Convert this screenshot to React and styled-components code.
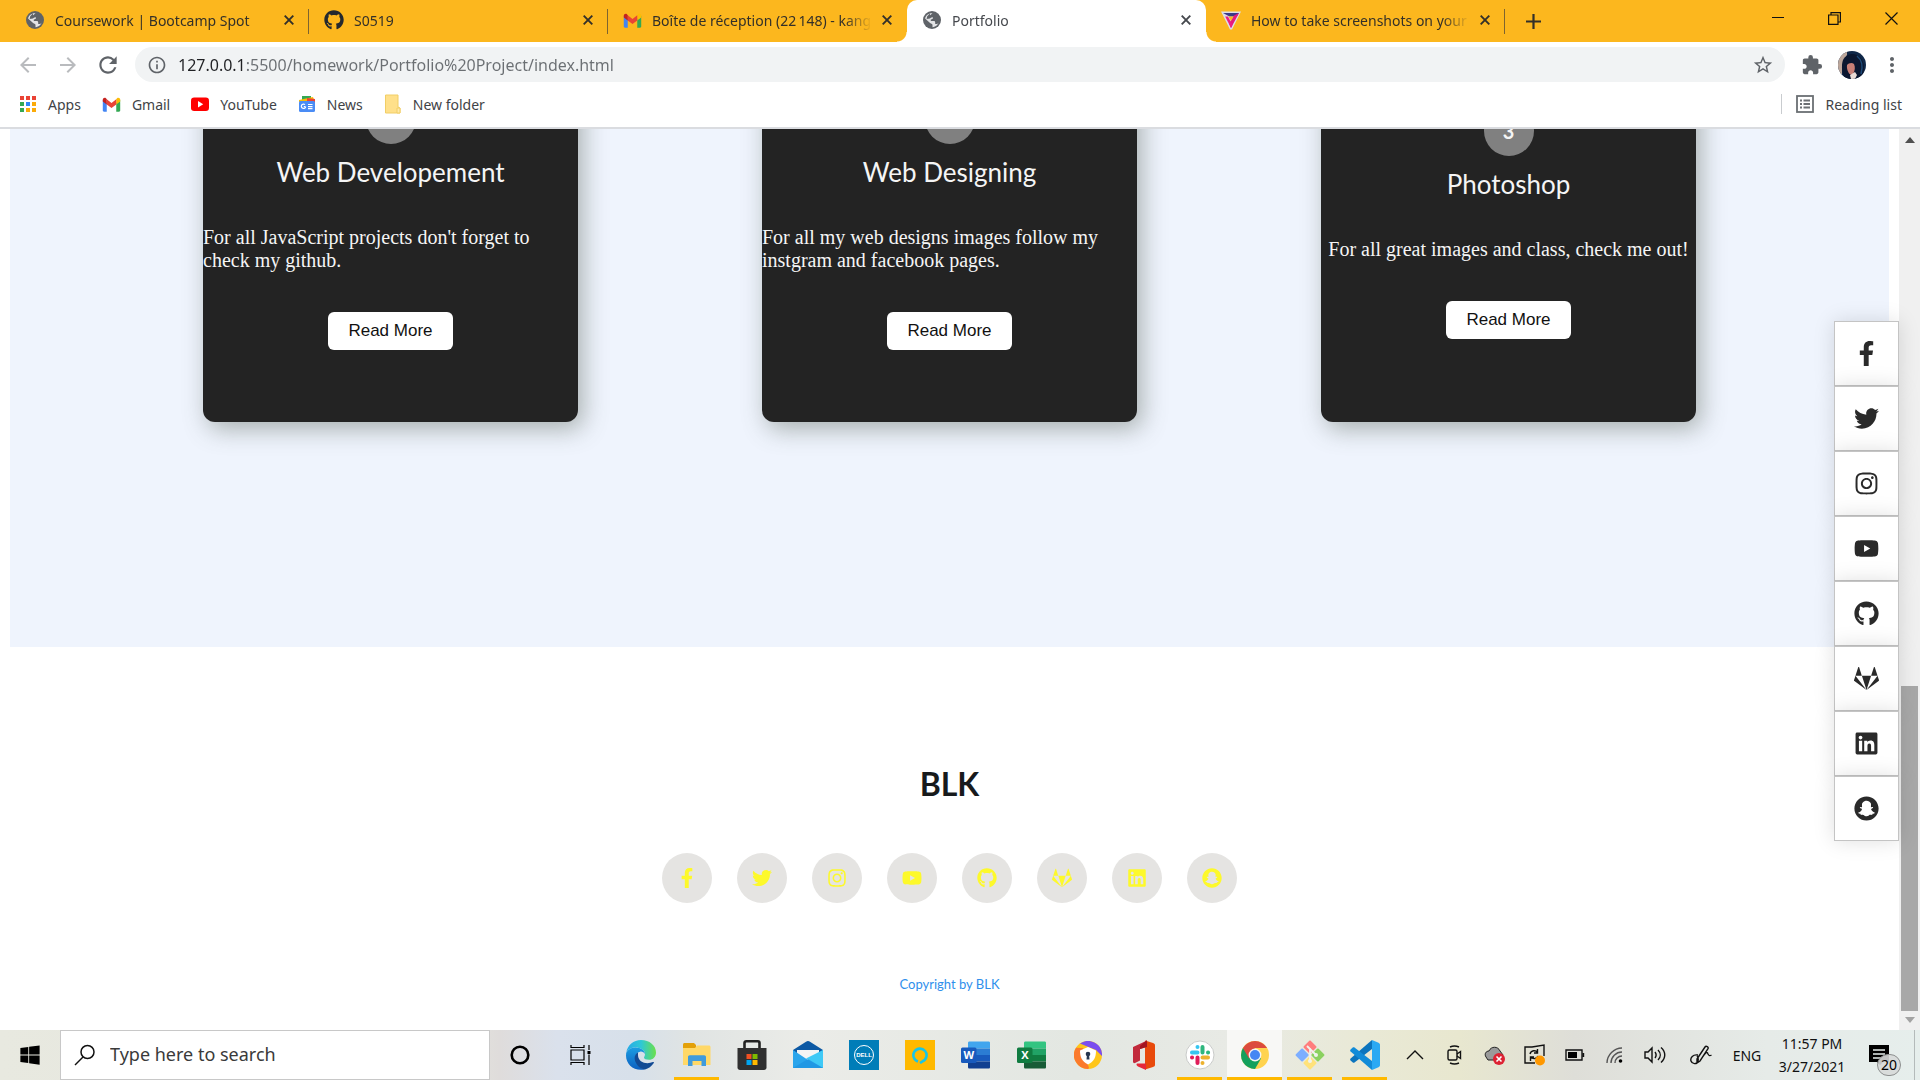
import React from "react";
import styled, { createGlobalStyle, css } from "styled-components";
import {
  FaFacebookF, FaTwitter, FaInstagram, FaYoutube, FaGithub, FaGitlab, FaLinkedin, FaSnapchat, FaWindows,
} from "react-icons/fa";
import {
  MdArrowBack, MdArrowForward, MdRefresh, MdInfoOutline, MdStarBorder, MdExtension, MdMoreVert,
} from "react-icons/md";

const UI_FONT = '"Noto Sans", "Open Sans", sans-serif';
const PAGE_FONT = 'Lato, "Open Sans", sans-serif';

const GlobalStyle = createGlobalStyle`
  * { box-sizing: border-box; }
  body { margin: 0; background: #fff; font-family: ${UI_FONT}; }
  button, input { font-family: inherit; }
  svg { display: block; flex: none; }
`;

const Screen = styled.div`
  height: 100vh;
  display: flex;
  flex-direction: column;
  overflow: hidden;
`;

const plainButton = css`
  display: flex;
  align-items: center;
  justify-content: center;
  padding: 0;
  border: 0;
  background: none;
  color: inherit;
`;

/* Browser window */

const TabStrip = styled.header`
  flex: none;
  display: flex;
  height: 42px;
  padding-left: 10px;
  background: #fcb71e;
  color: #333029;
`;

const Tab = styled.div`
  position: relative;
  flex: 0 1 299px;
  min-width: 0;
  display: flex;
  align-items: center;
  padding: 0 10px 2px 15px;
  font-size: 14px;
  ${(p) => p.$divider && css`
    &::after {
      content: "";
      position: absolute;
      right: 0;
      top: 9px;
      width: 1px;
      height: 25px;
      background: #7d6430;
    }
  `}
  ${(p) => p.$active && css`
    background: #fff;
    color: #45484d;
    border-radius: 10px 10px 0 0;
    &::before, &::after {
      content: "";
      position: absolute;
      bottom: 0;
      width: 10px;
      height: 10px;
    }
    &::before { left: -10px; background: radial-gradient(circle at 0 0, transparent 9px, #fff 10px); }
    &::after { right: -10px; background: radial-gradient(circle at 100% 0, transparent 9px, #fff 10px); }
  `}
`;

const TabTitle = styled.span`
  flex: 1;
  margin: 0 5px 0 10px;
  overflow: hidden;
  white-space: nowrap;
  mask-image: linear-gradient(90deg, #000 calc(100% - 28px), transparent);
`;

const TabButton = styled.button`
  ${plainButton}
  width: 20px;
  height: 20px;
`;

const NewTab = styled.button`
  ${plainButton}
  width: 56px;
`;

const WindowButtons = styled.div`
  display: flex;
  margin-left: auto;
  height: 36px;
  color: #111;
`;

const WindowButton = styled.button`
  ${plainButton}
  width: 57px;
`;

const Toolbar = styled.form`
  flex: none;
  display: flex;
  align-items: center;
  height: 45px;
  padding: 0 8px;
  color: #5f6368;
`;

const ToolButton = styled.button`
  ${plainButton}
  width: 40px;
  height: 36px;
  color: ${(p) => (p.$faded ? "#b9bbbe" : "#5f6368")};
`;

const AddressBar = styled.div`
  flex: 1;
  display: flex;
  align-items: center;
  height: 35px;
  margin: 0 7px;
  padding: 0 2px 0 12px;
  border-radius: 18px;
  background: #f1f3f4;
`;

const AddressInput = styled.input`
  flex: 1;
  min-width: 0;
  margin-left: 11px;
  padding: 0;
  border: 0;
  outline: 0;
  font-size: 16px;
  color: transparent;
  background: linear-gradient(90deg, #202124 68px, #6b6f73 68px) text;
`;

const Bookmarks = styled.nav`
  flex: none;
  display: flex;
  align-items: center;
  gap: 21px;
  height: 42px;
  padding: 0 18px 6px 19px;
  border-bottom: 2px solid #dadce0;
`;

const Bookmark = styled.a`
  display: flex;
  align-items: center;
  gap: 11px;
  font-size: 14px;
  color: #3f4347;
  text-decoration: none;
  white-space: nowrap;
`;

const ReadingList = styled.button`
  ${plainButton}
  gap: 11px;
  height: 20px;
  margin-left: auto;
  padding-left: 14px;
  border-left: 1px solid #c9cccf;
  font-size: 14px;
  color: #3f4347;
`;

/* Page shown in the window */

const Viewport = styled.div`
  position: relative;
  flex: 1;
  min-height: 0;
  display: flex;
`;

const Page = styled.main`
  flex: 1;
  min-width: 0;
  display: flex;
  flex-direction: column;
  justify-content: flex-end;
  padding: 0 10px;
  overflow: hidden;
`;

const Services = styled.section`
  flex: none;
  display: flex;
  justify-content: center;
  gap: 184px;
  padding: 125px 0 225px;
  background: #eff4fd;
`;

const Card = styled.article`
  width: 375px;
  height: 400px;
  display: flex;
  flex-direction: column;
  align-items: center;
  justify-content: center;
  border-radius: 12px;
  background: #232323;
  color: #f5f5f5;
  box-shadow: 5px 7px 25px rgba(70, 80, 70, 0.42);
`;

const CardNumber = styled.div`
  width: 50px;
  height: 50px;
  border-radius: 50%;
  background: #808080;
  font: bold 20px/50px ${PAGE_FONT};
  text-align: center;
`;

const CardTitle = styled.h2`
  margin: 11px 0 37px;
  font: 400 26px/34px ${PAGE_FONT};
`;

const CardText = styled.p`
  margin: 0 0 40px;
  font: 20px/23px "Liberation Serif", serif;
`;

const ReadMore = styled.button`
  width: 125px;
  height: 38px;
  flex: none;
  padding: 0;
  border: 0;
  border-radius: 6px;
  background: #fff;
  font: 17px "Liberation Sans", sans-serif;
  color: #111;
`;

const Footer = styled.footer`
  flex: none;
  display: flex;
  flex-direction: column;
  align-items: center;
  padding: 117px 0 35px;
  font-family: ${PAGE_FONT};
`;

const Brand = styled.h2`
  margin: 0;
  font-size: 32px;
  line-height: 40px;
  color: #171a1c;
`;

const FooterLinks = styled.nav`
  display: flex;
  gap: 25px;
  margin: 49px 0 71px;
`;

const FooterLink = styled.a`
  display: flex;
  align-items: center;
  justify-content: center;
  width: 50px;
  height: 50px;
  border-radius: 50%;
  background: #e5e4e2;
  font-size: 20px;
  color: #fdf92b;
`;

const Copyright = styled.p`
  margin: 0;
  font-size: 13px;
  line-height: 21px;
  color: #2f8fec;
`;

const SocialRail = styled.nav`
  position: absolute;
  top: calc(50% + 1px);
  right: 21px;
  transform: translateY(-50%);
`;

const RailLink = styled.a`
  display: flex;
  align-items: center;
  justify-content: center;
  width: 65px;
  height: 65px;
  border: 1px solid #c4c4c4;
  background: #fff;
  box-shadow: 0 0 20px rgba(0, 0, 0, 0.13);
  font-size: 25px;
  color: #2a2a2a;
`;

const Scrollbar = styled.div`
  flex: none;
  display: flex;
  flex-direction: column;
  align-items: center;
  justify-content: space-between;
  width: 21px;
  padding: 8px 0 7px;
  background: #f0f0f0;
`;

const Thumb = styled.div`
  width: 17px;
  height: 325px;
  margin: auto 0 6px;
  background: #a8a8a8;
`;

/* Taskbar */

const Taskbar = styled.footer`
  flex: none;
  display: flex;
  height: 50px;
  background: linear-gradient(90deg, #e8e9e0 0, #e4e4dd 24%, #dfdcdb 26%, #dae1ec 29%, #d7e0ea 33%, #e0e4e3 36%,
    #ebece8 42%, #e3e7e2 56%, #e8eae5 64%, #e9e9d6 71%, #e8e7cf 76%, #deded8 82%, #e6ebe8 92%, #e6eeec 100%);
`;

const TaskButton = styled.button`
  ${plainButton}
  flex: none;
  width: 60px;
  color: #000;
`;

const AppButton = styled.button`
  ${plainButton}
  flex: none;
  width: ${(p) => (p.$running ? 55 : 56)}px;
  padding-top: ${(p) => (p.$running ? 3 : 0)}px;
  background: ${(p) => (p.$active ? "#f8f8f6" : "none")};
  border-bottom: ${(p) => (p.$running ? "3px solid #ffb900" : "0")};
  ${(p) => p.$running && !p.$active && css`
    width: 45px;
    margin: 0 5px;
  `}
`;

const SearchBox = styled.label`
  flex: none;
  display: flex;
  align-items: center;
  width: 430px;
  padding: 0 13px;
  gap: 14px;
  border: 1px solid #c8c8c8;
  background: #fff;
`;

const SearchInput = styled.input`
  flex: 1;
  min-width: 0;
  padding: 0 0 2px;
  border: 0;
  outline: 0;
  font-size: 18px;
  color: #333;
  &::placeholder { color: #3a3a3a; opacity: 1; }
`;

const Apps = styled.div`
  display: flex;
  padding-left: 3px;
`;

const Tray = styled.div`
  display: flex;
  margin-left: auto;
`;

const TrayButton = styled.button`
  ${plainButton}
  width: ${(p) => (p.$wide ? 52 : 40)}px;
  color: #111;
  font-size: 14px;
`;

const Clock = styled.button`
  ${plainButton}
  flex-direction: column;
  width: 90px;
  font-size: 14px;
  line-height: 23px;
  color: #111;
`;

const Notifications = styled.button`
  ${plainButton}
  position: relative;
  width: 58px;
  margin-right: 5px;
  padding-right: 14px;
  border-right: 1px solid #b4baba;
  color: #000;
`;

const Badge = styled.span`
  position: absolute;
  left: 20px;
  top: 24px;
  width: 24px;
  height: 22px;
  border: 1px solid #8d8f8f;
  border-radius: 11px;
  background: rgba(215, 217, 217, 0.9);
  font-size: 14px;
  line-height: 20px;
  text-align: center;
`;

/* Drawings */

const CloseTabIcon = () => (
  <svg width="10" height="10" viewBox="0 0 10 10"><path d="m.7.7 8.600 8.600m0-8.600L.7 9.300" stroke="currentColor" strokeWidth="1.900" /></svg>
);
const PlusIcon = () => (
  <svg width="15" height="15" viewBox="0 0 15 15"><path d="M7.500 0v15M0 7.500h15" stroke="currentColor" strokeWidth="2.200" /></svg>
);

const Globe = () => (
  <svg width="20" height="20" viewBox="0 0 20 20">
    <circle cx="10" cy="10" r="9" fill="#5f6368" />
    <path d="M10.500 3.200 7.800 5.500c-.8.900.2 2 1.200 1.900l1.800-.2c.6 1.300-.4 2.200-2 2.200v1.700h3c1 0 1.400.7 1.400 1.500v1.300h1.500c1.400 0 2.200-1.200 2.200-2.900-.2 3.200-2.900 6-6.400 6.200v-1.900c0-1-.7-1.600-1.700-1.700L7.500 12.500 3.100 8.600C3.700 5.300 6.800 2.800 10.500 3.200z" fill="#e3e4e6" />
    <path d="M8 3.600 5.200 6.200 4.600 9 8 8.600 9.500 7 8 6.400z" fill="#5f6368" />
  </svg>
);

const GmailIcon = () => (
  <svg width="19" height="19" viewBox="0 0 24 24">
    <path d="M1 6v13.500c0 .8.600 1.500 1.500 1.500H6V10z" fill="#4285f4" />
    <path d="M23 6v13.500c0 .8-.6 1.500-1.500 1.500H18V10z" fill="#34a853" />
    <path d="M18 5.500V12l5-3.700V6c0-2.300-2.400-3.300-4-2z" fill="#fbbc04" />
    <path d="M6 12V5.500l6 4.500 6-4.500V12l-6 4.500z" fill="#ea4335" />
    <path d="M1 6v2.300L6 12V5.500L5 4C3.400 2.700 1 3.700 1 6z" fill="#c5221f" />
  </svg>
);

const TriangleLogo = () => (
  <svg width="20" height="20" viewBox="0 0 20 20">
    <path d="M0 1.500h20L11 19.500H9z" fill="#dcdde8" />
    <path d="M2 3h16l-2.200 3.600H8.500z" fill="#3b3a86" />
    <path d="M18 3 10 18 8 13.500l5-8z" fill="#e5187e" />
    <path d="M4.200 6.500 10 18l1.400-3L7 6.500z" fill="#ed1c85" />
    <path d="M7.500 6.500h5L10 11z" fill="#fcb71e" />
  </svg>
);

const AppsIcon = () => {
  const colors = ["#ea4335", "#ea4335", "#ea4335", "#34a853", "#2f86f6", "#fbab09", "#34a853", "#fbab09", "#fbab09"];
  return (
    <svg width="18" height="18" viewBox="0 0 18 18">
      {colors.map((c, i) => <rect key={i} x={1 + (i % 3) * 6} y={1 + Math.floor(i / 3) * 6} width="4" height="4" fill={c} />)}
    </svg>
  );
};

const YouTubeMark = () => (
  <svg width="18" height="18" viewBox="0 0 18 18">
    <rect y="2.500" width="18" height="13.500" rx="3.200" fill="#f00" />
    <path d="M7 6v6.500l5.200-3.200z" fill="#fff" />
  </svg>
);

const NewsIcon = () => (
  <svg width="18" height="18" viewBox="0 0 18 18">
    <path d="M4 1h9v5H4z" fill="#34a853" />
    <path d="m1 5 14-3 2 5H1z" fill="#fbbc04" />
    <path d="m9 3 8 1v4H9z" fill="#ea4335" />
    <rect x="1" y="6" width="16" height="11" rx="1.500" fill="#4a8cf5" />
    <path d="M7.500 11.500H5.800M7 9.600a2.200 2.200 0 1 0 .7 2M10 9.500h4.500M10 11.600h4.500M10 13.700h4.500" stroke="#fff" strokeWidth="1.200" fill="none" />
  </svg>
);

const FolderIcon = () => (
  <svg width="18" height="20" viewBox="0 0 18 20">
    <path d="M1.500 1h12.500v12l2 1v5H1.500z" fill="#ffe08a" stroke="#f1ce66" />
    <path d="M13 19v-5h3v5z" fill="#ffe9a8" stroke="#f1ce66" />
  </svg>
);

const ListIcon = () => (
  <svg width="18" height="20" viewBox="0 0 18 20" fill="none" stroke="#6b6f73" strokeWidth="1.800">
    <rect x="1" y="2" width="16" height="16" />
    <path d="M4 6.500h2M7.500 6.500H14M4 10h2M7.500 10H14M4 13.500h2M7.500 13.500H14" />
  </svg>
);

const Avatar = () => (
  <svg width="28" height="28" viewBox="0 0 28 28">
    <clipPath id="face"><circle cx="14" cy="14" r="14" /></clipPath>
    <g clipPath="url(#face)">
      <path d="M0 0h28v28H0z" fill="#0f2748" />
      <path d="M0 6 9 0v4L4 14v9H0z" fill="#bda79b" />
      <path d="M5 9c3-7 12-8 17-3 5 6 5 13 2 19l-6 3H7C4 22 3 15 5 9z" fill="#0b1730" />
      <path d="M9 14c1.500-2 5-3 7-1 1.500 3 1 7-1 10-1.500 1.500-3.500.500-4.500-1.500C9.300 19.500 8.600 16.500 9 14z" fill="#c87f76" />
      <path d="m12 24 5-3 2 3-2 4h-4z" fill="#eadbd5" />
      <path d="M19 5c5 4 6 11 4 18" stroke="#1d4a78" strokeWidth="1.500" fill="none" />
    </g>
  </svg>
);

const Minimize = () => <svg width="12" height="12" viewBox="0 0 12 12"><path d="M0 5.500h12" stroke="#111" /></svg>;
const Restore = () => (
  <svg width="13" height="13" viewBox="0 0 13 13" fill="none" stroke="#111" strokeWidth="1.200">
    <path d="M.6 3h9.400v9.400H.6zM3 3V.6h9.400V10H10" />
  </svg>
);
const CloseWindow = () => <svg width="13" height="13" viewBox="0 0 13 13"><path d="m.5.5 12 12m0-12-12 12" stroke="#111" strokeWidth="1.200" /></svg>;

const SearchIcon = () => (
  <svg width="22" height="22" viewBox="0 0 22 22" fill="none" stroke="#111" strokeWidth="1.500">
    <circle cx="13.500" cy="8" r="6.500" /><path d="M9 13 1 21" />
  </svg>
);
const CortanaIcon = () => <svg width="20" height="20" viewBox="0 0 20 20"><circle cx="10" cy="10" r="8.300" fill="none" stroke="#000" strokeWidth="2.600" /></svg>;
const TaskViewIcon = () => (
  <svg width="21" height="20" viewBox="0 0 21 20" fill="none" stroke="#000" strokeWidth="1.200">
    <path d="M1 5h13v10H1zM1 0v2.500h13V0M1 20v-2.500h13V20M19 0v5M19 9.500V20" /><path d="M17.500 6h3v3h-3z" fill="#000" stroke="none" />
  </svg>
);

const EdgeIcon = () => (
  <svg width="30" height="30" viewBox="0 0 30 30">
    <defs>
      <linearGradient id="edgeTop"><stop offset="0" stopColor="#27a9e8" /><stop offset=".5" stopColor="#2ec8d6" /><stop offset="1" stopColor="#6be04a" /></linearGradient>
      <linearGradient id="edgeSide" x1="0" y1="0" x2="0" y2="1"><stop offset="0" stopColor="#1b9de2" /><stop offset="1" stopColor="#0d5fc0" /></linearGradient>
    </defs>
    <path d="M.3 12.500C1.500 5 7.500 0 15 0c8.500 0 15 5.500 15 12.500 0 4.500-3 7.300-7 7.300-3 0-5-1-5-2.300 0-.8 1-1.300 1-3.500C19 10 14 7.500 9.500 7.500 5.500 7.500 1.800 9.500.3 12.500z" fill="url(#edgeTop)" />
    <path d="M.2 12.800C2 9.500 5.500 7.600 9.500 7.600c5.500 0 9.500 3.400 9.500 6.600-1-2-3-3-5-2.500-4 1-5 4-4 8 1 5 5.500 9 8.500 9.800C8 31.500 0 24.500 0 15.500z" fill="url(#edgeSide)" />
    <path d="M12 12.500c-4 2-4 6.500-2 10.500 2.500 4.500 6.500 6.500 9 6.500 3.500-1 6.500-3 8.800-6.500.4-.8-.2-1.200-.9-.9-6 2.700-14.900.6-14.900-7z" fill="#124a94" />
  </svg>
);
const ExplorerIcon = () => (
  <svg width="28" height="24" viewBox="0 0 28 24">
    <path d="M0 1.500C0 .7.700 0 1.500 0H11l2 2v4H0z" fill="#e3a008" />
    <path d="M0 5h12l2-2.500h12c.8 0 1.500.7 1.500 1.500v18H0z" fill="#ffd867" />
    <path d="M5 23V14c0-1 .7-1.800 1.800-1.800h14.400c1 0 1.800.8 1.800 1.800v9h-4.500v-5h-9v5z" fill="#3f9bdc" />
  </svg>
);
const StoreIcon = () => (
  <svg width="30" height="30" viewBox="0 0 30 30">
    <path d="M7.500 9V3c0-1 .7-1.700 1.700-1.700h11.600c1 0 1.700.7 1.700 1.700v6" fill="none" stroke="#222" strokeWidth="2.600" />
    <path d="M.5 8h29v19.500c0 1.500-1 2.500-2.500 2.500H3C1.500 30 .5 29 .5 27.500z" fill="#303030" />
    <path d="M9.500 14h5v5h-5z" fill="#f25022" /><path d="M15.500 14h5v5h-5z" fill="#7fba00" /><path d="M9.500 20h5v5h-5z" fill="#00a4ef" /><path d="M15.500 20h5v5h-5z" fill="#ffb900" />
  </svg>
);
const MailIcon = () => (
  <svg width="30" height="28" viewBox="0 0 30 28">
    <path d="M0 9 13 .7c1.300-.9 2.700-.9 4 0L30 9v4H0z" fill="#0c59a4" />
    <path d="M4 9h22v8l-11 4L4 17z" fill="#f4f4f4" />
    <path d="M0 9v18h30V9L15 19z" fill="#2aa5ec" /><path d="M30 9v18L13 17.500z" fill="#3fc9f6" /><path d="M0 27h30L15 18z" fill="#1d8fe0" opacity=".6" />
  </svg>
);
const Tile = styled.span`
  display: flex;
  align-items: center;
  justify-content: center;
  width: 30px;
  height: 30px;
  background: ${(p) => p.$color};
`;
const DellRing = styled.span`
  width: 20px;
  height: 20px;
  border: 1px solid #fff;
  border-radius: 50%;
  font: bold 6px/18px "Liberation Sans", sans-serif;
  text-align: center;
  color: #fff;
`;
const AlexaRing = () => (
  <svg width="16" height="17" viewBox="0 0 16 17"><path d="M6 14.500A6.600 6.600 0 1 1 10.500 14.300L8 16" fill="none" stroke="#19c5e6" strokeWidth="2.600" /></svg>
);
const OfficeDoc = ({ letter, shades, tag }) => (
  <svg width="30" height="28" viewBox="0 0 30 28">
    <path d="M7 2C7 1 7.500.5 8.500.5h19c1 0 1.500.5 1.500 1.500v5.500H7z" fill={shades[0]} />
    <path d="M7 7.500h22V14H7z" fill={shades[1]} /><path d="M7 14h22v6.500H7z" fill={shades[2]} />
    <path d="M7 20.500h22V26c0 1-.5 1.500-1.500 1.500h-19C7.500 27.500 7 27 7 26z" fill={shades[3]} />
    <rect y="6.500" width="15.500" height="15.500" rx="1.500" fill={tag} />
    <text x="7.800" y="18.300" fill="#fff" fontFamily="Open Sans, sans-serif" fontWeight="700" fontSize="11" textAnchor="middle">{letter}</text>
  </svg>
);
const PrivacyBrowserIcon = () => (
  <svg width="28" height="28" viewBox="0 0 28 28">
    <circle cx="14" cy="14" r="14" fill="#ffc61a" />
    <path d="M14 28A14 14 0 0 1 2 6.700L9 7l6 20z" fill="#fb7a2c" />
    <path d="M6 2.600A14 14 0 0 1 28 15L22 9z" fill="#7b4df0" />
    <path d="M6 9.500 14 6l8 3.500c0 7-2 11-8 14-6-3-8-7-8-14z" fill="#fff" />
    <circle cx="14" cy="13" r="2.300" fill="#26354f" /><path d="M13 13h2l.5 5.500h-3z" fill="#26354f" />
  </svg>
);
const OfficeIcon = () => (
  <svg width="24" height="30" viewBox="0 0 24 30">
    <path d="M1 7 14 1v6l-6 2v11.500L3 23c-1.500.5-2-.5-2-1.500z" fill="#c22a3c" />
    <path d="M13 .5 21 3c1.500.5 2 1 2 2.500v19c0 1.500-.5 2-2 2.500l-8 2.500z" fill="#e84a0c" />
    <path d="M5 23.500h9V30L6 26.500c-1.500-.8-2-2-1-3z" fill="#e5283a" /><path d="M8 6 15 0v7l-7 2z" fill="#a31621" />
  </svg>
);
const SlackIcon = () => (
  <svg width="30" height="30" viewBox="0 0 30 30">
    <circle cx="15" cy="15" r="14" fill="#fff" stroke="#c9cbc9" />
    <g strokeLinecap="round" strokeWidth="4">
      <path d="M7 12.500h5.500M12.500 7v.1" stroke="#36c5f0" /><path d="M17.500 7v5.500M23 12.500h.1" stroke="#2eb67d" />
      <path d="M23 17.500h-5.500M17.500 23v.1" stroke="#ecb22e" /><path d="M12.500 23v-5.500M7 17.500h.1" stroke="#e01e5a" />
    </g>
  </svg>
);
const ChromeIcon = () => (
  <svg width="28" height="28" viewBox="0 0 28 28">
    <circle cx="14" cy="14" r="14" fill="#ffd34f" />
    <path d="M14 14 1.900 7A14 14 0 0 0 14 28l6-10.500z" fill="#14a05d" />
    <path d="M1.900 7A14 14 0 0 1 26.100 7H14l-6 10.500z" fill="#dc4b3e" />
    <circle cx="14" cy="14" r="6.400" fill="#f4f4f4" /><circle cx="14" cy="14" r="5" fill="#4587f3" />
  </svg>
);
const GitIcon = () => (
  <svg width="30" height="30" viewBox="0 0 30 30">
    <g transform="rotate(45 15 15)">
      <rect x="4.500" y="4.500" width="9.800" height="9.800" rx="1" fill="#ff7d7d" /><rect x="15.700" y="4.500" width="9.800" height="9.800" rx="1" fill="#8bd160" />
      <rect x="4.500" y="15.700" width="9.800" height="9.800" rx="1" fill="#7daeff" /><rect x="15.700" y="15.700" width="9.800" height="9.800" rx="1" fill="#ffe27a" />
    </g>
    <path d="M15 8v13M12 6l9 9" stroke="#f1f2ee" strokeWidth="1.800" /><circle cx="15" cy="21" r="2" fill="#f1f2ee" /><circle cx="21" cy="15" r="2" fill="#f1f2ee" />
  </svg>
);
const CodeIcon = () => (
  <svg width="30" height="30" viewBox="0 0 30 30">
    <path d="M22 0v9L4.500 22.500c-.6.400-1.200.4-1.700 0L.6 20.400c-.6-.6-.6-1.400 0-2z" fill="#0b74bd" />
    <path d="M22 30v-9L4.500 7.500c-.6-.4-1.200-.4-1.700 0L.6 9.600c-.6.6-.6 1.400 0 2z" fill="#118bd8" />
    <path d="M22 0 28.500 2.800c1 .5 1.500 1.200 1.500 2.200v20c0 1-.5 1.700-1.500 2.200L22 30z" fill="#2aa9f3" />
  </svg>
);

const stroke = { fill: "none", stroke: "#111", strokeWidth: 1.4 };
const Chevron = () => <svg width="18" height="10" viewBox="0 0 18 10" {...stroke}><path d="m1 9 8-8 8 8" /></svg>;
const CameraIcon = () => (
  <svg width="18" height="20" viewBox="0 0 18 20" {...stroke}><rect x="2" y="5" width="9" height="10" rx="1.500" /><path d="M11 9l3.500-2.500v7L11 11M4 2c3-1.300 6-1.300 9 0M4 18c3 1.300 6 1.300 9 0" /></svg>
);
const CloudIcon = () => (
  <svg width="22" height="20" viewBox="0 0 22 20">
    <path d="M2 12c-2-3 0-6 3-6 2-5 9-5 11 0l3 4-6 5H4z" fill="#9a9a9a" stroke="#222" />
    <circle cx="15" cy="14" r="6" fill="#dd2233" /><path d="m12.500 11.500 5 5m0-5-5 5" stroke="#fff" strokeWidth="1.600" />
  </svg>
);
const SyncIcon = () => (
  <svg width="22" height="22" viewBox="0 0 22 22" {...stroke}>
    <path d="M20 12V1L8 3H1v16h10M6 10c1-4 6-4 7.500-1.500M13.500 5v4H10M14 12c-1 3-5 3.500-7.500 1M6.500 17v-4H10" /><circle cx="16" cy="16.500" r="5" fill="#ff9800" stroke="none" />
  </svg>
);
const BatteryIcon = () => <svg width="20" height="12" viewBox="0 0 20 12" {...stroke}><path d="M1 1h16v10H1zM18.500 4v4" /><path d="M3 3h9v6H3z" fill="#000" stroke="none" /></svg>;
const WifiIcon = () => (
  <svg width="18" height="18" viewBox="0 0 18 18" {...stroke}><path d="M1 17C1 9 8 2 16 2M5 17C5 11 10 6 16 6M9 17c0-4 3-7 7-7" stroke="#555" /><circle cx="14.500" cy="15" r="1.800" fill="#000" stroke="none" /></svg>
);
const SpeakerIcon = () => (
  <svg width="22" height="18" viewBox="0 0 22 18" {...stroke}><path d="M1 6h3l4-4v14l-4-4H1zM11 6c1.500 2 1.500 4 0 6M14 4c3 3 3 7 0 10M17 1.500c5 4.500 5 10.500 0 15" /></svg>
);
const PenIcon = () => (
  <svg width="22" height="20" viewBox="0 0 22 20" {...stroke}><path d="M8 10c-5-1-8 3-7 6 1 3 6 4 7 0 .500-2 0-4-1-5M7 14 15 2c1-1.500 4 0 3 1.700L10 16l-3 2zM12 13c3-5 5-7 6-4 1 2 2 2 3.500 1" /></svg>
);
const MessageIcon = () => (
  <svg width="20" height="20" viewBox="0 0 20 20"><path d="M0 0h20v17h-6l-3 3-3-3H0z" /><path d="M4 5h12M4 9h12M4 13h8" stroke="#e6eeec" strokeWidth="1.300" /></svg>
);
const Arrow = ({ down }) => (
  <svg width="10" height="6" viewBox="0 0 10 6"><path d={down ? "M0 0h10L5 6z" : "M0 6h10L5 0z"} fill={down ? "#a3a3a3" : "#505050"} /></svg>
);

/* Content */

const TABS = [
  { title: "Coursework | Bootcamp Spot", icon: <Globe />, divider: true },
  { title: "S0519", icon: <FaGithub size={20} color="#24292e" />, divider: true },
  { title: "Boîte de réception (22\u2009148) - kang", icon: <GmailIcon /> },
  { title: "Portfolio", icon: <Globe />, active: true },
  { title: "How to take screenshots on your", icon: <TriangleLogo />, divider: true },
];

const BOOKMARKS = [
  ["Apps", <AppsIcon />], ["Gmail", <GmailIcon />], ["YouTube", <YouTubeMark />], ["News", <NewsIcon />], ["New folder", <FolderIcon />],
];

const CARDS = [
  ["Web Developement", "For all JavaScript projects don't forget to check my github."],
  ["Web Designing", "For all my web designs images follow my instgram and facebook pages."],
  ["Photoshop", "For all great images and class, check me out!"],
];

const SOCIALS = [
  ["Facebook", FaFacebookF], ["Twitter", FaTwitter], ["Instagram", FaInstagram], ["YouTube", FaYoutube],
  ["GitHub", FaGithub], ["GitLab", FaGitlab], ["LinkedIn", FaLinkedin], ["Snapchat", FaSnapchat],
];

const APPS = [
  { name: "Edge", icon: <EdgeIcon /> },
  { name: "File Explorer", icon: <ExplorerIcon />, running: true },
  { name: "Store", icon: <StoreIcon /> },
  { name: "Mail", icon: <MailIcon /> },
  { name: "Dell", icon: <Tile $color="#007db8"><DellRing>DELL</DellRing></Tile> },
  { name: "Alexa", icon: <Tile $color="#ffb900"><AlexaRing /></Tile> },
  { name: "Word", icon: <OfficeDoc letter="W" shades={["#41a5ee", "#2b7cd3", "#185abd", "#103f91"]} tag="#185abd" /> },
  { name: "Excel", icon: <OfficeDoc letter="X" shades={["#33c481", "#21a366", "#107c41", "#185c37"]} tag="#107c41" /> },
  { name: "Secure Browser", icon: <PrivacyBrowserIcon /> },
  { name: "Office", icon: <OfficeIcon /> },
  { name: "Slack", icon: <SlackIcon />, running: true },
  { name: "Chrome", icon: <ChromeIcon />, running: true, active: true },
  { name: "Git", icon: <GitIcon />, running: true },
  { name: "Code", icon: <CodeIcon />, running: true },
];

const TRAY = [
  ["Show hidden icons", <Chevron />], ["Meet now", <CameraIcon />], ["OneDrive", <CloudIcon />], ["Update", <SyncIcon />],
  ["Battery", <BatteryIcon />], ["Network", <WifiIcon />], ["Volume", <SpeakerIcon />],
];

function BrowserChrome() {
  return (
    <>
      <TabStrip>
        {TABS.map((t) => (
          <Tab key={t.title} $active={t.active} $divider={t.divider}>
            {t.icon}
            <TabTitle>{t.title}</TabTitle>
            <TabButton aria-label={`Close ${t.title}`}><CloseTabIcon /></TabButton>
          </Tab>
        ))}
        <NewTab aria-label="New tab"><PlusIcon /></NewTab>
        <WindowButtons>
          <WindowButton aria-label="Minimize"><Minimize /></WindowButton>
          <WindowButton aria-label="Restore"><Restore /></WindowButton>
          <WindowButton aria-label="Close"><CloseWindow /></WindowButton>
        </WindowButtons>
      </TabStrip>
      <Toolbar>
        <ToolButton type="button" $faded aria-label="Back"><MdArrowBack size={24} /></ToolButton>
        <ToolButton type="button" $faded aria-label="Forward"><MdArrowForward size={24} /></ToolButton>
        <ToolButton type="button" aria-label="Reload"><MdRefresh size={26} /></ToolButton>
        <AddressBar>
          <MdInfoOutline size={20} />
          <AddressInput aria-label="Address" defaultValue="127.0.0.1:5500/homework/Portfolio%20Project/index.html" />
          <ToolButton type="button" aria-label="Bookmark this page"><MdStarBorder size={22} /></ToolButton>
        </AddressBar>
        <ToolButton type="button" aria-label="Extensions"><MdExtension size={22} /></ToolButton>
        <ToolButton type="button" aria-label="Profile"><Avatar /></ToolButton>
        <ToolButton type="button" aria-label="Menu"><MdMoreVert size={24} /></ToolButton>
      </Toolbar>
      <Bookmarks>
        {BOOKMARKS.map(([label, icon]) => <Bookmark key={label} href="#">{icon}{label}</Bookmark>)}
        <ReadingList><ListIcon />Reading list</ReadingList>
      </Bookmarks>
    </>
  );
}

function Portfolio() {
  return (
    <Viewport>
      <Page>
        <Services>
          {CARDS.map(([title, text], i) => (
            <Card key={title}>
              <CardNumber>{i + 1}</CardNumber>
              <CardTitle>{title}</CardTitle>
              <CardText>{text}</CardText>
              <ReadMore>Read More</ReadMore>
            </Card>
          ))}
        </Services>
        <Footer>
          <Brand>BLK</Brand>
          <FooterLinks>
            {SOCIALS.map(([name, Icon]) => <FooterLink key={name} href="#" aria-label={name}><Icon /></FooterLink>)}
          </FooterLinks>
          <Copyright>Copyright by BLK</Copyright>
        </Footer>
      </Page>
      <SocialRail>
        {SOCIALS.map(([name, Icon]) => <RailLink key={name} href="#" aria-label={name}><Icon /></RailLink>)}
      </SocialRail>
      <Scrollbar>
        <Arrow />
        <Thumb />
        <Arrow down />
      </Scrollbar>
    </Viewport>
  );
}

function WindowsTaskbar() {
  return (
    <Taskbar>
      <TaskButton aria-label="Start"><FaWindows size={22} /></TaskButton>
      <SearchBox>
        <SearchIcon />
        <SearchInput aria-label="Search" placeholder="Type here to search" />
      </SearchBox>
      <TaskButton aria-label="Cortana"><CortanaIcon /></TaskButton>
      <TaskButton aria-label="Task view"><TaskViewIcon /></TaskButton>
      <Apps>
        {APPS.map((a) => (
          <AppButton key={a.name} aria-label={a.name} $running={a.running} $active={a.active}>{a.icon}</AppButton>
        ))}
      </Apps>
      <Tray>
        {TRAY.map(([name, icon]) => <TrayButton key={name} aria-label={name}>{icon}</TrayButton>)}
        <TrayButton $wide aria-label="Pen"><PenIcon /></TrayButton>
        <TrayButton>ENG</TrayButton>
        <Clock><span>11:57 PM</span><span>3/27/2021</span></Clock>
        <Notifications aria-label="Notifications"><MessageIcon /><Badge>20</Badge></Notifications>
      </Tray>
    </Taskbar>
  );
}

export default function App() {
  return (
    <Screen>
      <GlobalStyle />
      <BrowserChrome />
      <Portfolio />
      <WindowsTaskbar />
    </Screen>
  );
}
